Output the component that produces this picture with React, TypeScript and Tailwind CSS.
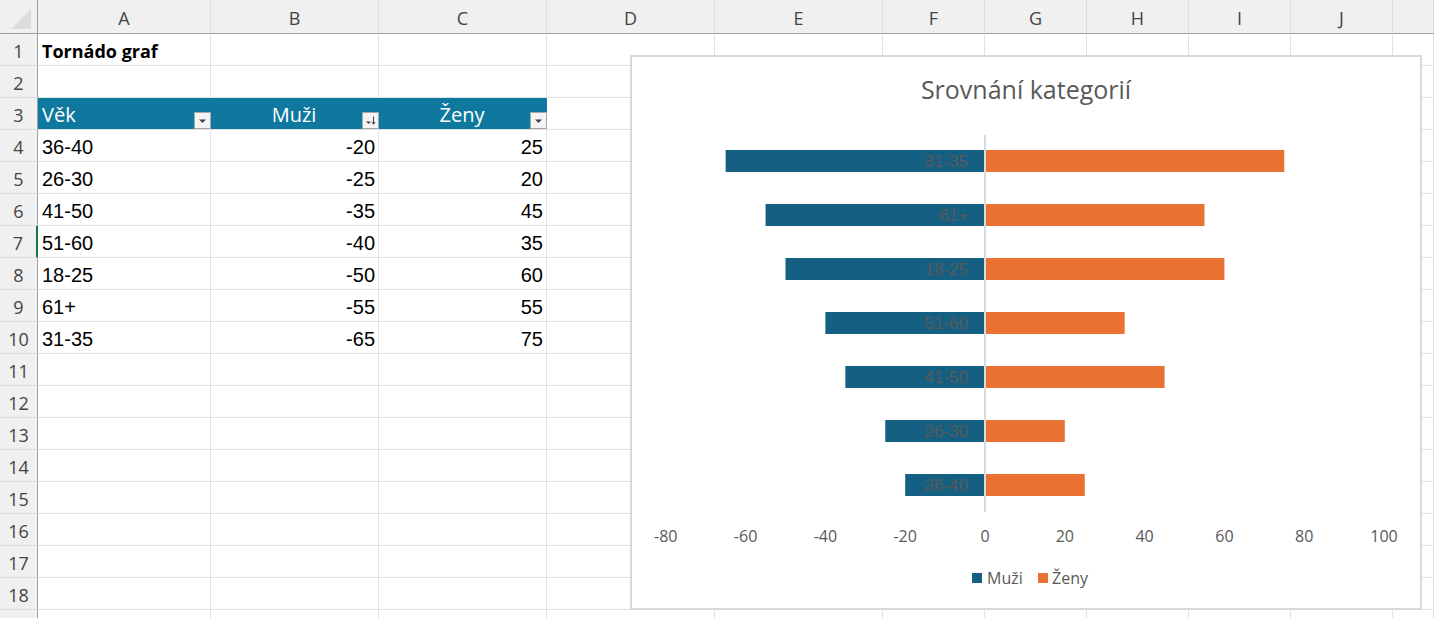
import React from "react";

const COLS = ["A", "B", "C", "D", "E", "F", "G", "H", "I", "J", ""];
const ROWS = Array.from({ length: 19 }, (_, i) => i + 1);

const table: Record<number, [string, string, string]> = {
  4: ["36-40", "-20", "25"],
  5: ["26-30", "-25", "20"],
  6: ["41-50", "-35", "45"],
  7: ["51-60", "-40", "35"],
  8: ["18-25", "-50", "60"],
  9: ["61+", "-55", "55"],
  10: ["31-35", "-65", "75"],
};

const chartData: [string, number, number][] = [
  ["31-35", -65, 75],
  ["61+", -55, 55],
  ["18-25", -50, 60],
  ["51-60", -40, 35],
  ["41-50", -35, 45],
  ["26-30", -25, 20],
  ["36-40", -20, 25],
];

const UI = "font-['Open_Sans','Noto_Sans',sans-serif]";
const ARIAL = "font-['Liberation_Sans',Arial,sans-serif]";

function FilterBtn({ sort }: { sort?: boolean }) {
  return (
    <div className="absolute right-0 top-[14px] w-[17px] h-[17px] bg-[#f4f4f4] border border-[#a6a6a6] flex items-center justify-center">
      <svg width="15" height="15" viewBox="0 0 15 15">
        {sort ? (
          <>
            <path d="M3 8.5 L8 8.5 L5.5 11 Z" fill="#444" />
            <path d="M10.5 3.5 V11" stroke="#444" strokeWidth="1" />
            <path d="M8.8 9 L10.5 11.3 L12.2 9" stroke="#444" strokeWidth="1" fill="none" />
          </>
        ) : (
          <path d="M4 6.5 L11 6.5 L7.5 10 Z" fill="#444" />
        )}
      </svg>
    </div>
  );
}

function Chart() {
  const X0 = 355;
  const k = 3.99;
  const ticks = [-80, -60, -40, -20, 0, 20, 40, 60, 80, 100];
  return (
    <div className="absolute left-[630px] top-[55px] w-[792px] h-[555px] bg-white border-2 border-[#d9d9d9]">
      <svg className="absolute -left-[2px] -top-[2px]" width="792" height="555" viewBox="0 0 792 555">
        <text x="396" y="44" textAnchor="middle" fontSize="25" fill="#595959" className={UI}>
          Srovnání kategorií
        </text>
        {chartData.map(([label, m, z], i) => {
          const cy = 106 + 54 * i;
          const left = X0 + m * k;
          const right = X0 + z * k;
          return (
            <g key={label}>
              <rect x={left} y={cy - 11} width={354 - left} height="22" fill="#156082" />
              <rect x="356" y={cy - 11} width={right - 356} height="22" fill="#E97132" />
              <text x="338" y={cy + 6} textAnchor="end" fontSize="17" fill="#595959" className={ARIAL}>
                {label}
              </text>
            </g>
          );
        })}
        <rect x="354" y="80" width="2" height="377" fill="#d9d9d9" />
        {ticks.map((t) => (
          <text key={t} x={X0 + t * k} y="487" textAnchor="middle" fontSize="16" fill="#595959" className={UI}>
            {t}
          </text>
        ))}
        <rect x="342" y="518" width="10" height="10" fill="#156082" />
        <text x="357" y="529" fontSize="16" fill="#595959" className={UI}>
          Muži
        </text>
        <rect x="408" y="518" width="10" height="10" fill="#E97132" />
        <text x="422" y="529" fontSize="16" fill="#595959" className={UI}>
          Ženy
        </text>
      </svg>
    </div>
  );
}

export default function App() {
  return (
    <div className="relative w-[1434px] h-[618px] overflow-hidden bg-white">
      <div className="grid grid-cols-[38px_173px_168px_168px_168px_168px_102px_102px_102px_102px_102px_1fr] grid-rows-[34px_repeat(19,32px)]">
        <div className="relative bg-[#f0f0f0] border-r border-b border-[#a0a0a0]">
          <svg className="absolute right-[4px] bottom-[2px]" width="24" height="24" viewBox="0 0 24 24">
            <path d="M22 2 L22 22 L2 22 Z" fill="#dcdcdc" />
          </svg>
        </div>
        {COLS.map((c, i) => (
          <div
            key={"h" + i}
            className={
              "bg-[#f0f0f0] border-b border-b-[#a0a0a0] border-r border-r-[#dcdcdc] flex items-center justify-center pt-[4px] text-[18px] text-[#444] " +
              UI
            }
          >
            {c}
          </div>
        ))}
        {ROWS.map((r) => (
          <React.Fragment key={r}>
            <div
              className={
                "bg-[#f0f0f0] border-b border-b-[#dcdcdc] flex items-center justify-center pt-[3px] text-[18px] text-[#444] " +
                UI +
                (r === 7 ? " border-r-2 border-r-[#107c41]" : " border-r border-r-[#a0a0a0]")
              }
            >
              {r < 19 ? r : ""}
            </div>
            {COLS.map((_, ci) => {
              const isHead = r === 3 && ci < 3;
              let content: React.ReactNode = null;
              let cls = "relative border-r border-b border-[#e1e1e1] flex items-center pt-[3px]";
              if (r === 1 && ci === 0) {
                content = (
                  <span className={"pl-[4px] font-bold text-[18px] text-black whitespace-nowrap " + UI}>
                    Tornádo graf
                  </span>
                );
              }
              if (isHead) {
                cls = "relative bg-[#0f789e] border-b border-[#e1e1e1] flex items-center pt-[3px] text-white text-[20px]";
                const label = ["Věk", "Muži", "Ženy"][ci];
                content = (
                  <>
                    <span className={(ci === 0 ? "pl-[4px] " : "w-full text-center pr-[2px] ") + UI}>{label}</span>
                    <FilterBtn sort={ci === 1} />
                  </>
                );
              }
              if (table[r] && ci < 3) {
                const v = table[r][ci];
                content = (
                  <span
                    className={
                      "text-[20px] text-black " + ARIAL + (ci === 0 ? " pl-[4px]" : " w-full text-right pr-[3px]")
                    }
                  >
                    {v}
                  </span>
                );
              }
              return (
                <div key={ci} className={cls}>
                  {content}
                </div>
              );
            })}
          </React.Fragment>
        ))}
      </div>
      <Chart />
    </div>
  );
}
